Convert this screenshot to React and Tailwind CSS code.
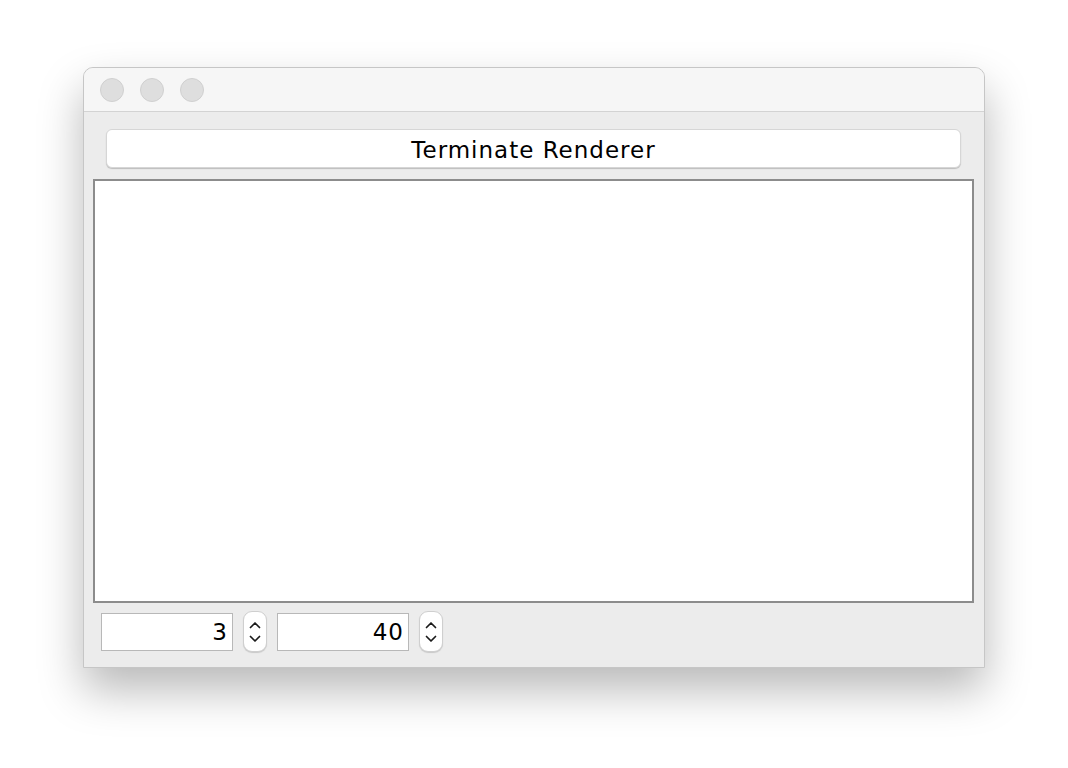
export default function App() {
  const font = { fontFamily: '"DejaVu Sans", "Noto Sans", sans-serif' };

  const Spinner = () => (
    <div className="w-[24px] h-[41px] bg-white rounded-[9px] border border-[#cfcfcf] shadow-[0_1px_1px_rgba(0,0,0,0.15)] flex flex-col items-center justify-center gap-[6px]">
      <svg width="12" height="8" viewBox="0 0 12 8">
        <path d="M1.5 6.5 L6 2 L10.5 6.5" fill="none" stroke="#1a1a1a" strokeWidth="1.7" strokeLinecap="round" strokeLinejoin="round" />
      </svg>
      <svg width="12" height="8" viewBox="0 0 12 8">
        <path d="M1.5 1.5 L6 6 L10.5 1.5" fill="none" stroke="#1a1a1a" strokeWidth="1.7" strokeLinecap="round" strokeLinejoin="round" />
      </svg>
    </div>
  );

  const Field = ({ value }) => (
    <div className="w-[132px] h-[38px] bg-white border border-[#b8b8b8] flex items-center justify-end pr-[4px] pt-[2px] text-[23px] tracking-[1px] text-black">
      {value}
    </div>
  );

  return (
    <div className="w-full h-[768px] bg-white pt-[67px] pl-[83px]" style={font}>
      <div className="w-[902px] h-[601px] rounded-t-[10px] border border-[#c6c6c6] bg-[#ececec] shadow-[0_22px_45px_rgba(0,0,0,0.28)] flex flex-col overflow-hidden">
        {/* Title bar */}
        <div className="h-[44px] bg-[#f6f6f6] border-b border-[#d3d3d3] flex items-center gap-[16px] pl-[16px] shrink-0">
          <div className="w-[24px] h-[24px] rounded-full bg-[#dedede] border border-[#d0d0d0]" />
          <div className="w-[24px] h-[24px] rounded-full bg-[#dedede] border border-[#d0d0d0]" />
          <div className="w-[24px] h-[24px] rounded-full bg-[#dedede] border border-[#d0d0d0]" />
        </div>

        {/* Button */}
        <div className="pt-[17px] pl-[22px] pr-[23px]">
          <div className="h-[39px] bg-white rounded-[6px] border border-[#d6d6d6] shadow-[0_1px_1px_rgba(0,0,0,0.2)] flex items-center justify-center pt-[3px] text-[23px] tracking-[1px] text-black">
            Terminate Renderer
          </div>
        </div>

        {/* Text area */}
        <div className="pt-[11px] pl-[9px] pr-[10px]">
          <div className="h-[424px] bg-white border-2 border-[#8c8c8c]" />
        </div>

        {/* Bottom controls */}
        <div className="flex items-center pl-[17px] pt-[8px] gap-[10px]">
          <Field value="3" />
          <Spinner />
          <Field value="40" />
          <Spinner />
        </div>
      </div>
    </div>
  );
}
